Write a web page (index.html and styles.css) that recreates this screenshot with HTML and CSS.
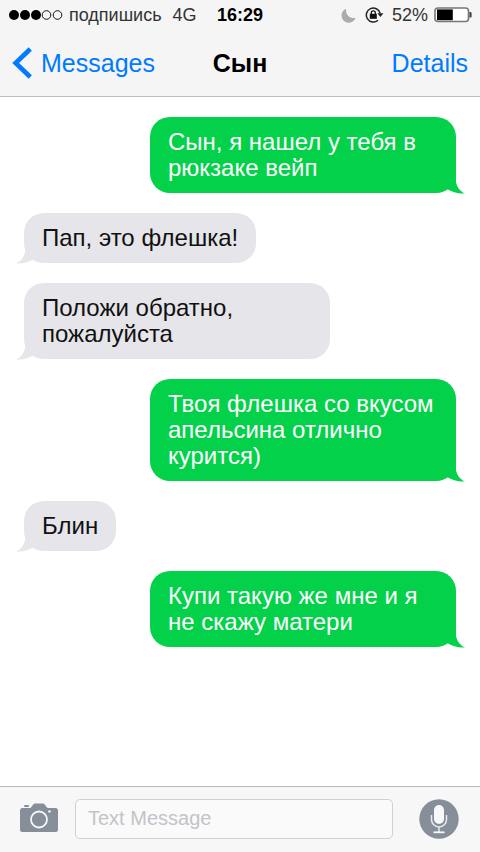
FILE: index.html
```
<!DOCTYPE html>
<html lang="ru">
    <head>
        <meta charset="utf-8">
        <meta name="viewport" content="width=device-width, initial-scale=1">
        <title>Сын</title>
        <link rel="stylesheet" href="styles.css">
    </head>
    <body>
        <header class="header">
            <div class="status">
                <div class="status-left">
                    <svg class="signal" width="55" height="12" viewBox="0 0 55 12">
                        <g fill="#000">
                            <circle cx="6" cy="6" r="5"/>
                            <circle cx="17" cy="6" r="5"/>
                            <circle cx="28" cy="6" r="5"/>
                        </g>
                        <g fill="none" stroke="#111" stroke-width="1">
                            <circle cx="38.5" cy="6" r="4.3"/>
                            <circle cx="49.5" cy="6" r="4.3"/>
                        </g>
                    </svg>
                    <span>подпишись</span>
                    <span class="network">4G</span>
                </div>
                <div class="time">16:29</div>
                <div class="status-right">
                    <svg width="15" height="15" viewBox="0 0 15 15">
                        <path d="M5.2 .8A7.2 7.2 0 1 0 14.6 9.8A7.6 7.6 0 0 1 5.2 .8Z" fill="#a9abae"/>
                    </svg>
                    <svg class="lock" width="19" height="16" viewBox="0 0 19 16">
                        <path d="M15.1 6.2A7 7 0 1 0 13 13.3" fill="none" stroke="#222" stroke-width="1.5"/>
                        <path d="M12.3 6.2H18.4L15.4 10Z" fill="#222"/>
                        <rect x="4.8" y="6.8" width="7" height="5" fill="#111"/>
                        <path d="M6.3 7.2V5.8a2 2 0 0 1 4 0V7.2" fill="none" stroke="#111" stroke-width="1.3"/>
                    </svg>
                    <span>52%</span>
                    <svg class="battery" width="38" height="16" viewBox="0 0 38 16">
                        <rect x="1" y="1" width="33.5" height="13.5" rx="3" fill="#fff" stroke="#777" stroke-width="1.6"/>
                        <path d="M3 2.4H18.8V13.2H3Z" fill="#000"/>
                        <path d="M35.4 5h1a1.2 1.2 0 0 1 1.2 1.2v3.2a1.2 1.2 0 0 1-1.2 1.2h-1Z" fill="#444"/>
                    </svg>
                </div>
            </div>
            <nav class="nav">
                <a class="back" href="#">
                    <svg width="20" height="32" viewBox="0 0 20 32">
                        <path d="M18.3 2L3.6 16L18.3 30" fill="none" stroke="#007aff" stroke-width="4.6"/>
                    </svg>
                    <span>Messages</span>
                </a>
                <h1 class="title">Сын</h1>
                <a class="details" href="#">Details</a>
            </nav>
        </header>

        <main class="chat">
            <div class="message sent">Сын, я нашел у тебя в рюкзаке вейп
                <svg class="tail" width="32" height="22" viewBox="0 0 32 22"><path d="M8 0H23V10C24 15 27 19.5 32 21.5C25 22 19 20 14 17L8 17Z"/></svg>
            </div>
            <div class="message received">Пап, это флешка!
                <svg class="tail" width="32" height="22" viewBox="0 0 32 22"><path d="M8 0H23V10C24 15 27 19.5 32 21.5C25 22 19 20 14 17L8 17Z"/></svg>
            </div>
            <div class="message received">Положи обратно, пожалуйста
                <svg class="tail" width="32" height="22" viewBox="0 0 32 22"><path d="M8 0H23V10C24 15 27 19.5 32 21.5C25 22 19 20 14 17L8 17Z"/></svg>
            </div>
            <div class="message sent">Твоя флешка со вкусом апельсина отлично курится)
                <svg class="tail" width="32" height="22" viewBox="0 0 32 22"><path d="M8 0H23V10C24 15 27 19.5 32 21.5C25 22 19 20 14 17L8 17Z"/></svg>
            </div>
            <div class="message received">Блин
                <svg class="tail" width="32" height="22" viewBox="0 0 32 22"><path d="M8 0H23V10C24 15 27 19.5 32 21.5C25 22 19 20 14 17L8 17Z"/></svg>
            </div>
            <div class="message sent">Купи такую же мне и я не скажу матери
                <svg class="tail" width="32" height="22" viewBox="0 0 32 22"><path d="M8 0H23V10C24 15 27 19.5 32 21.5C25 22 19 20 14 17L8 17Z"/></svg>
            </div>
        </main>

        <form class="composer">
            <button class="icon-button" type="button" aria-label="Camera">
                <svg width="40" height="34" viewBox="0 0 40 34">
                    <path d="M3 6H11C13 6 13.5 1.5 16 1.5H24C26.5 1.5 27 6 29 6H36.5Q39 6 39 8.5V27.5Q39 30 36.5 30H3.5Q1 30 1 27.5V8.5Q1 6 3 6Z" fill="#858e99"/>
                    <rect x="5" y="3" width="5" height="2" rx="1" fill="#858e99"/>
                    <circle cx="20" cy="17.5" r="8" fill="none" stroke="#f7f7f7" stroke-width="1.8"/>
                    <rect x="29" y="8.5" width="3" height="2" rx="1" fill="#f7f7f7"/>
                </svg>
            </button>
            <input class="field" type="text" placeholder="Text Message" aria-label="Text Message">
            <button class="icon-button" type="button" aria-label="Voice">
                <svg width="40" height="40" viewBox="0 0 40 40">
                    <circle cx="20" cy="20" r="19.7" fill="#858e99"/>
                    <rect x="15" y="6" width="10" height="19" rx="5" fill="#f7f8fa"/>
                    <path d="M12.5 16V20.5a7.5 7.5 0 0 0 15 0V16M20 28V33" fill="none" stroke="#e9ebee" stroke-width="1.5"/>
                    <path d="M14.5 33.3H25.5" stroke="#f7f8fa" stroke-width="1.8"/>
                </svg>
            </button>
        </form>
    </body>
</html>
```
FILE: styles.css
```
*{
    box-sizing: border-box;
}
body{
    margin: 0;
    min-height: 100vh;
    display: flex;
    flex-direction: column;
    background: #fff;
    font-family: "Liberation Sans", Arial, sans-serif;
    color: #111;
}
svg{
    display: block;
    flex: none;
}
.header{
    background: #f5f5f5;
    border-bottom: 1px solid #bdbdbd;
}
.status{
    display: grid;
    grid-template-columns: 1fr auto 1fr;
    align-items: center;
    height: 30px;
    padding: 0 8px;
    font-size: 18px;
    color: #333;
}
.status-left,
.status-right{
    display: flex;
    align-items: center;
}
.status-right{
    justify-content: flex-end;
}
.signal{
    margin-right: 6px;
}
.network{
    margin-left: 11px;
}
.time{
    font-weight: bold;
    color: #000;
}
.lock{
    margin: 0 8px 0 9px;
}
.battery{
    margin-left: 6px;
}
.nav{
    display: grid;
    grid-template-columns: 1fr auto 1fr;
    align-items: center;
    height: 66px;
    padding: 0 12px;
    font-size: 25px;
}
.nav a{
    color: #007aff;
    text-decoration: none;
}
.back{
    display: flex;
    align-items: center;
    gap: 9px;
}
.title{
    margin: 0;
    font-size: 25px;
    color: #000;
}
.details{
    justify-self: end;
}
.chat{
    flex: 1;
    display: flex;
    flex-direction: column;
    align-items: flex-start;
    gap: 20px;
    padding: 20px 24px;
}
.message{
    position: relative;
    max-width: calc(100% - 126px);
    padding: 12px 18px;
    border-radius: 20px;
    font-size: 24px;
    line-height: 26px;
}
.sent{
    align-self: flex-end;
    background: #04d14a;
    color: #fff;
    fill: #04d14a;
}
.received{
    background: #e5e5ea;
    fill: #e5e5ea;
}
.tail{
    position: absolute;
    bottom: -1px;
    right: -9px;
}
.received .tail{
    right: auto;
    left: -8px;
    transform: scaleX(-1);
}
.composer{
    display: flex;
    align-items: center;
    height: 66px;
    padding: 0 21px 2px 19px;
    background: #f7f7f7;
    border-top: 1px solid #b3bac6;
}
.icon-button{
    padding: 0;
    border: 0;
    background: none;
    cursor: pointer;
}
.field{
    flex: 1;
    min-width: 0;
    height: 40px;
    margin: 0 26px 0 16px;
    padding: 0 12px;
    border: 1px solid #d0d0d2;
    border-radius: 5px;
    background: #fafafa;
    font-family: inherit;
    font-size: 20px;
    outline: none;
}
.field::placeholder{
    color: #c3c3c9;
}
```
